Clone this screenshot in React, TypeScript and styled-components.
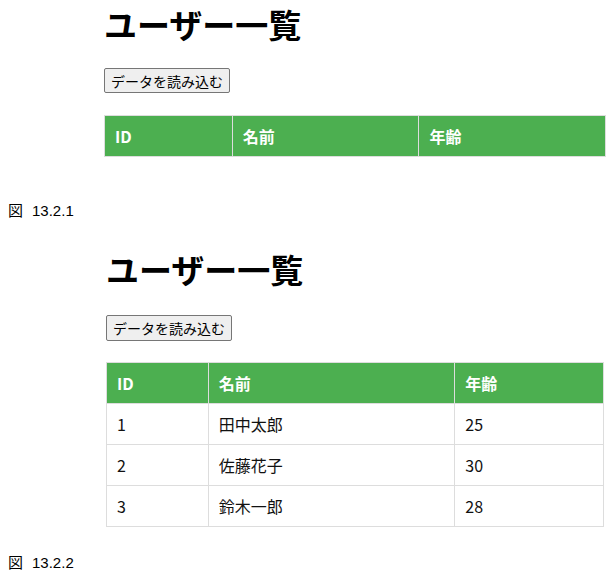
import styled, { createGlobalStyle } from "styled-components";

const GlobalStyle = createGlobalStyle`
    html, body {
        margin: 0;
        padding: 0;
        background: #ffffff;
    }
    body {
        width: 613px;
        height: 575px;
        overflow: hidden;
    }
`;

const Page = styled.div`
    display: flex;
    flex-direction: column;
`;

interface IShotProps {
    left: number;
    right: number;
    top: number;
}

const Shot = styled.div<IShotProps>`
    display: flex;
    flex-direction: column;
    align-items: flex-start;
    padding: ${(props) => `${props.top}px ${props.right}px 0 ${props.left}px`};
    font-family: "Noto Sans CJK JP", "Noto Sans", sans-serif;
`;

const Title = styled.h1`
    margin: 0;
    font-size: 33px;
    line-height: 48px;
    font-weight: 700;
    color: #000;
`;

interface IButtonProps {
    tall?: boolean;
}

const LoadButton = styled.button<IButtonProps>`
    margin-top: ${(props) => (props.tall ? "22px" : "20px")};
    height: ${(props) => (props.tall ? "26px" : "25px")};
    padding: 0 6px;
    font-family: "Noto Sans CJK JP", sans-serif;
    font-size: 14px;
    color: #000;
    background: #efefef;
    border: 1px solid #767676;
    border-radius: 2px;
`;

const Table = styled.table<{ gap: number }>`
    width: 100%;
    margin-top: ${(props) => props.gap}px;
    border-collapse: collapse;
    font-size: 16px;
`;

const Th = styled.th`
    height: 41px;
    box-sizing: border-box;
    padding: 0 10px;
    text-align: left;
    font-weight: 700;
    color: #fff;
    background: #4caf50;
    border: 1px solid #ddd;
`;

const Td = styled.td`
    height: 41px;
    box-sizing: border-box;
    padding: 0 10px;
    color: #111;
    border: 1px solid #ddd;
`;

const Caption = styled.div<{ top: number }>`
    margin-top: ${(props) => props.top}px;
    padding-left: 8px;
    font-family: "Liberation Sans", Arial, "Noto Sans CJK JP", sans-serif;
    font-size: 15px;
    line-height: 17px;
    color: #000;
`;

const Label = styled.span`
    margin-right: 9px;
    font-family: "Noto Sans CJK JP", sans-serif;
`;

interface IUser {
    id: number;
    name: string;
    age: number;
}

const users: IUser[] = [
    { id: 1, name: "田中太郎", age: 25 },
    { id: 2, name: "佐藤花子", age: 30 },
    { id: 3, name: "鈴木一郎", age: 28 },
];

interface IUserListProps {
    rows: IUser[];
    widths: number[];
    tall?: boolean;
}

function UserList({ rows, widths, tall }: IUserListProps) {
    return (
        <>
            <Title>ユーザー一覧</Title>
            <LoadButton tall={tall}>データを読み込む</LoadButton>
            <Table gap={tall ? 21 : 22}>
                <thead>
                    <tr>
                        <Th style={{ width: widths[0] }}>ID</Th>
                        <Th style={{ width: widths[1] }}>名前</Th>
                        <Th style={{ width: widths[2] }}>年齢</Th>
                    </tr>
                </thead>
                <tbody>
                    {rows.map((user) => (
                        <tr key={user.id}>
                            <Td>{user.id}</Td>
                            <Td>{user.name}</Td>
                            <Td>{user.age}</Td>
                        </tr>
                    ))}
                </tbody>
            </Table>
        </>
    );
}

function App() {
    return (
        <Page>
            <GlobalStyle />
            <Shot left={104} right={7} top={0}>
                <UserList rows={[]} widths={[128, 187, 187]} />
            </Shot>
            <Caption top={44}>
                <Label>図</Label>13.2.1
            </Caption>
            <Shot left={106} right={9} top={26}>
                <UserList rows={users} widths={[102, 247, 149]} tall />
            </Shot>
            <Caption top={26}>
                <Label>図</Label>13.2.2
            </Caption>
        </Page>
    );
}

export default App;
